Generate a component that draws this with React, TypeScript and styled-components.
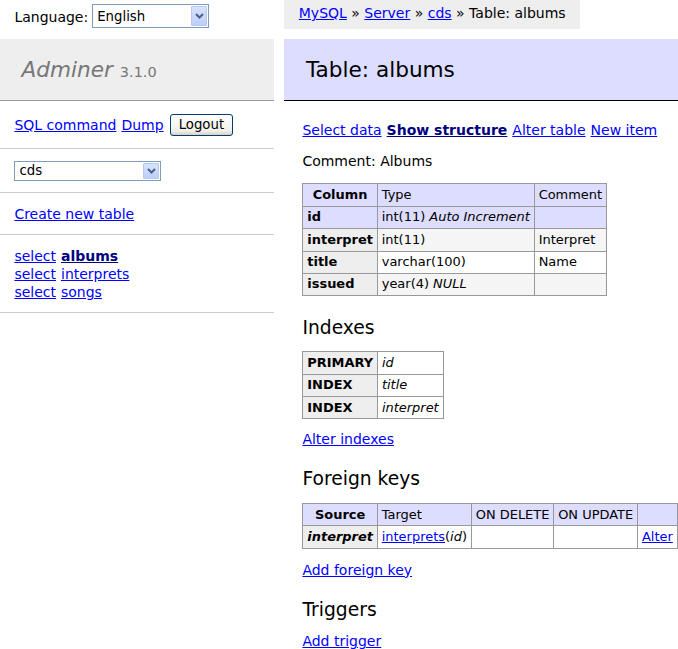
import React from 'react';
import styled, { createGlobalStyle } from 'styled-components';

const GlobalStyle = createGlobalStyle`
  html, body {
    margin: 0;
    padding: 0;
    background: #fff;
  }
  body {
    color: #000;
    font-family: "DejaVu Sans", Verdana, sans-serif;
    font-size: 14px;
    line-height: 18px;
  }
`;

const Page = styled.div`
  display: flex;
  align-items: flex-start;
  min-height: 649px;
`;

const Sidebar = styled.div`
  width: 273.6px;
  flex: none;
  white-space: nowrap;
`;

const LangBar = styled.div`
  height: 38.8px;
  display: flex;
  align-items: flex-start;
  gap: 4px;
  padding: 4.3px 14.4px 0;
  box-sizing: border-box;
  line-height: 26px;
`;

const SelectBox = styled.div<{ $w: number; $h: number }>`
  width: ${p => p.$w}px;
  height: ${p => p.$h}px;
  box-sizing: border-box;
  border: 1px solid #7f9db9;
  background: #fff;
  display: flex;
  align-items: center;
  justify-content: space-between;
  padding: 1px 1px 1px 4px;
  font-size: 13.3px;
  line-height: 1;
`;

const SelectArrow = styled.span`
  width: 16px;
  align-self: stretch;
  box-sizing: border-box;
  border: 1px solid #b5c8f5;
  border-radius: 1px;
  background: linear-gradient(#d8e3fc, #bccffa);
  display: flex;
  align-items: center;
  justify-content: center;
`;

const Logo = styled.h1`
  margin: 0;
  padding: 17.28px 21.6px;
  font-size: 21.6px;
  line-height: 27px;
  font-weight: normal;
  color: #777;
  background: #eee;
  border-bottom: 1px solid #999;
`;

const LogoLink = styled.span`
  font-style: italic;
`;

const Version = styled.span`
  font-size: 67%;
  line-height: 1;
`;

const MenuSection = styled.div`
  padding: 11.5px 14.4px;
  border-bottom: 1px solid #ccc;
  display: flex;
  flex-direction: column;
  align-items: flex-start;
`;

const MenuRow = styled.div`
  display: flex;
  align-items: center;
  gap: 5px;
`;

const Link = styled.a<{ $active?: boolean }>`
  color: ${p => (p.$active ? 'navy' : 'blue')};
  font-weight: ${p => (p.$active ? 'bold' : 'normal')};
  text-decoration: underline;
  cursor: pointer;
`;

const Button = styled.button`
  font: 13.3px "DejaVu Sans", Verdana, sans-serif;
  height: 22px;
  padding: 0 8px;
  margin: 1px 0 1px 1px;
  border: 1px solid #003c74;
  border-radius: 3px;
  background: linear-gradient(#ffffff, #f0f0ea 80%, #d6d0c5);
  color: #000;
`;

const Main = styled.div`
  flex: 1;
  min-width: 0;
  margin-left: 10.8px;
  display: flex;
  flex-direction: column;
  align-items: flex-start;
`;

const Breadcrumb = styled.div`
  height: 28.8px;
  line-height: 26px;
  padding: 0 14.4px;
  margin-bottom: 10px;
  background: #eee;
  white-space: nowrap;
`;

const Title = styled.h2`
  align-self: stretch;
  margin: 0 0 20px;
  padding: 17.28px 21.6px;
  font-size: 21.6px;
  line-height: 27px;
  font-weight: normal;
  background: #ddf;
  border-bottom: 1px solid #000;
`;

const Body = styled.div`
  padding: 0 20px 0 18px;
  display: flex;
  flex-direction: column;
  align-items: flex-start;
`;

const Para = styled.p<{ $gap?: number }>`
  margin: ${p => p.$gap ?? 13}px 0 0;
  display: flex;
  gap: 5px;
  white-space: nowrap;
`;

const Heading = styled.h3`
  margin: 19.5px 0 0;
  font-size: 18.72px;
  line-height: 23px;
  font-weight: normal;
`;

const Table = styled.table<{ $gap?: number }>`
  margin: ${p => p.$gap ?? 12.5}px 0 0;
  border-collapse: separate;
  border-spacing: 0;
  border-top: 1px solid #999;
  border-left: 1px solid #999;
  font-size: 12.96px;
  line-height: 16.2px;
  white-space: nowrap;
`;

const Cell = styled.td<{ $bg?: string }>`
  border-right: 1px solid #999;
  border-bottom: 1px solid #999;
  padding: 2.6px 3.9px;
  text-align: left;
  background: ${p => p.$bg || '#fff'};
`;

const Head = styled.th<{ $bg?: string; $center?: boolean; $italic?: boolean }>`
  border-right: 1px solid #999;
  border-bottom: 1px solid #999;
  padding: 2.6px 3.9px;
  font-weight: bold;
  text-align: ${p => (p.$center ? 'center' : 'left')};
  font-style: ${p => (p.$italic ? 'italic' : 'normal')};
  background: ${p => p.$bg || '#eee'};
`;

const Em = styled.i``;

const Chevron = () => (
  <svg width="9" height="6" viewBox="0 0 9 6">
    <path d="M1 1 L4.5 4.5 L8 1" fill="none" stroke="#4d6185" strokeWidth="2" />
  </svg>
);

const Select: React.FC<{ w: number; h: number; value: string }> = ({ w, h, value }) => (
  <SelectBox $w={w} $h={h}>
    <span>{value}</span>
    <SelectArrow>
      <Chevron />
    </SelectArrow>
  </SelectBox>
);

const LAV = '#ddf';
const ODD = '#f5f5f5';

const columns = [
  { name: 'id', type: 'int(11)', extra: 'Auto Increment', comment: '', bg: LAV },
  { name: 'interpret', type: 'int(11)', extra: '', comment: 'Interpret', bg: ODD },
  { name: 'title', type: 'varchar(100)', extra: '', comment: 'Name', bg: '' },
  { name: 'issued', type: 'year(4)', extra: 'NULL', comment: '', bg: ODD },
];

const indexes = [
  ['PRIMARY', 'id'],
  ['INDEX', 'title'],
  ['INDEX', 'interpret'],
];

const App: React.FC = () => (
  <>
    <GlobalStyle />
    <Page>
      <Sidebar>
        <LangBar>
          <span>Language:</span>
          <Select w={117} h={24} value="English" />
        </LangBar>
        <Logo>
          <LogoLink>Adminer</LogoLink> <Version>3.1.0</Version>
        </Logo>
        <MenuSection>
          <MenuRow>
            <Link>SQL command</Link>
            <Link>Dump</Link>
            <Button>Logout</Button>
          </MenuRow>
        </MenuSection>
        <MenuSection>
          <Select w={147} h={20} value="cds" />
        </MenuSection>
        <MenuSection>
          <Link>Create new table</Link>
        </MenuSection>
        <MenuSection>
          {['albums', 'interprets', 'songs'].map(t => (
            <MenuRow key={t}>
              <Link>select</Link>
              <Link $active={t === 'albums'}>{t}</Link>
            </MenuRow>
          ))}
        </MenuSection>
      </Sidebar>

      <Main>
        <Breadcrumb>
          <Link>MySQL</Link> » <Link>Server</Link> » <Link>cds</Link> » Table: albums
        </Breadcrumb>
        <Title>Table: albums</Title>
        <Body>
          <Para $gap={0}>
            <Link>Select data</Link>
            <Link $active>Show structure</Link>
            <Link>Alter table</Link>
            <Link>New item</Link>
          </Para>
          <Para>Comment: Albums</Para>

          <Table $gap={13}>
            <thead>
              <tr>
                <Head $bg={LAV} $center>Column</Head>
                <Cell $bg={LAV}>Type</Cell>
                <Cell $bg={LAV}>Comment</Cell>
              </tr>
            </thead>
            <tbody>
              {columns.map(c => (
                <tr key={c.name}>
                  <Head $bg={c.bg === LAV ? LAV : undefined}>{c.name}</Head>
                  <Cell $bg={c.bg}>
                    {c.type}
                    {c.extra && (
                      <>
                        {' '}
                        <Em>{c.extra}</Em>
                      </>
                    )}
                  </Cell>
                  <Cell $bg={c.bg}>{c.comment}</Cell>
                </tr>
              ))}
            </tbody>
          </Table>

          <Heading>Indexes</Heading>
          <Table>
            <tbody>
              {indexes.map(([kind, col], i) => (
                <tr key={i}>
                  <Head>{kind}</Head>
                  <Cell>
                    <Em>{col}</Em>
                  </Cell>
                </tr>
              ))}
            </tbody>
          </Table>
          <Para $gap={10.5}>
            <Link>Alter indexes</Link>
          </Para>

          <Heading>Foreign keys</Heading>
          <Table>
            <thead>
              <tr>
                <Head $bg={LAV} $center>Source</Head>
                <Cell $bg={LAV}>Target</Cell>
                <Cell $bg={LAV}>ON DELETE</Cell>
                <Cell $bg={LAV}>ON UPDATE</Cell>
                <Cell $bg={LAV}></Cell>
              </tr>
            </thead>
            <tbody>
              <tr>
                <Head $italic>interpret</Head>
                <Cell>
                  <Link>interprets</Link>(<Em>id</Em>)
                </Cell>
                <Cell></Cell>
                <Cell></Cell>
                <Cell>
                  <Link>Alter</Link>
                </Cell>
              </tr>
            </tbody>
          </Table>
          <Para $gap={12}>
            <Link>Add foreign key</Link>
          </Para>

          <Heading>Triggers</Heading>
          <Para $gap={11}>
            <Link>Add trigger</Link>
          </Para>
        </Body>
      </Main>
    </Page>
  </>
);

export default App;
